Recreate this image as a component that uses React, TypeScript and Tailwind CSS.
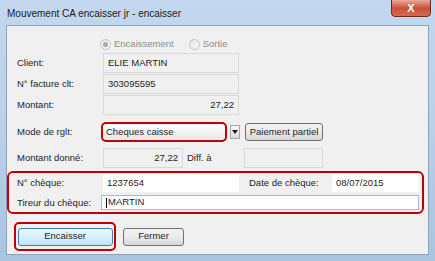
import React from 'react';

const font = "font-['Liberation_Sans',Arial,sans-serif]";

const Label: React.FC<{ children: React.ReactNode; w?: string }> = ({ children, w = 'w-[86px]' }) => (
  <div className={`${w} shrink-0 text-[9.5px] text-[#1e1e1e] leading-none`}>{children}</div>
);

const ReadField: React.FC<{ value?: string; right?: boolean; w?: string }> = ({ value = '', right, w = 'w-[136px]' }) => (
  <div
    className={`${w} h-full flex items-center px-[4px] border border-[#d9d9d9] bg-[#f0f0f0] text-[9.5px] text-[#1e1e1e] ${
      right ? 'justify-end' : ''
    }`}
  >
    {value}
  </div>
);

const WinButton: React.FC<{ children: React.ReactNode; w: string; focused?: boolean }> = ({ children, w, focused }) => (
  <div
    className={`${w} h-[18px] flex items-center justify-center rounded-[3px] border text-[9.5px] text-[#1e1e1e] ${
      focused
        ? 'border-[#3c7fb1] bg-gradient-to-b from-[#eaf6fd] via-[#d9f0fc] to-[#bee6fd]'
        : 'border-[#707070] bg-gradient-to-b from-[#f2f2f2] via-[#ebebeb] to-[#d6d6d6]'
    }`}
  >
    {children}
  </div>
);

const Radio: React.FC<{ checked?: boolean }> = ({ checked }) => (
  <span className="w-[11px] h-[11px] rounded-full border border-[#c4c4c4] bg-gradient-to-br from-[#e6e6e6] to-[#f8f8f8] flex items-center justify-center">
    {checked && <span className="w-[5px] h-[5px] rounded-full bg-[#a8a8a8]" />}
  </span>
);

export default function App() {
  return (
    <div
      className={`${font} w-[435px] h-[261px] flex flex-col px-[6px] pb-[6px] bg-gradient-to-b from-[#c3d8ee] via-[#b9d0e9] to-[#aac3df] overflow-hidden`}
    >
      {/* title bar */}
      <div className="h-[25px] shrink-0 flex items-start justify-between">
        <div className="mt-[6px] ml-[1px] text-[10px] text-[#1a1a1a]">Mouvement CA encaisser jr - encaisser</div>
        <div className="-mr-[2px] mt-[-1px] w-[40px] h-[18px] rounded-b-[4px] border border-[#6e2a1e] bg-gradient-to-b from-[#e9a99a] via-[#c9503a] to-[#d8694d] flex items-center justify-center">
          <span className="text-white text-[11px] font-bold leading-none">X</span>
        </div>
      </div>

      {/* client area */}
      <div className="flex-1 bg-[#f0f0f0] border border-[#8da2bd] flex flex-col">
        {/* radios */}
        <div className="mt-[11px] h-[14px] flex items-center pl-[93px] text-[9.5px] text-[#8d8d8d]">
          <Radio checked />
          <span className="ml-[3px]">Encaissement</span>
          <span className="ml-[15px]">
            <Radio />
          </span>
          <span className="ml-[3px]">Sortie</span>
        </div>

        <div className="mt-[2px] flex flex-col gap-[1px] pl-[10px]">
          <div className="h-[20px] flex items-center">
            <Label>Client:</Label>
            <ReadField value="ELIE MARTIN" />
          </div>
          <div className="h-[20px] flex items-center">
            <Label>N° facture clt:</Label>
            <ReadField value="303095595" />
          </div>
          <div className="h-[20px] flex items-center">
            <Label>Montant:</Label>
            <ReadField value="27,22" right />
          </div>
        </div>

        {/* mode de reglement */}
        <div className="mt-[7px] h-[20px] flex items-center pl-[10px]">
          <Label w="w-[84px]">Mode de rglt:</Label>
          <div className="w-[126px] h-[20px] rounded-[5px] border-[2px] border-[#c00000] bg-gradient-to-b from-[#fdfdfd] to-[#e6e6e6] flex items-center px-[3px] text-[9.5px] text-[#1e1e1e]">
            Cheques caisse
          </div>
          <div className="ml-[3px] w-[10px] h-[14px] border border-[#a7a7a7] bg-gradient-to-b from-[#f6f6f6] to-[#dcdcdc] flex items-center justify-center">
            <svg width="6" height="4" viewBox="0 0 6 4">
              <path d="M0 0h6L3 4z" fill="#1a1a1a" />
            </svg>
          </div>
          <div className="ml-[5px]">
            <WinButton w="w-[78px]">Paiement partiel</WinButton>
          </div>
        </div>

        {/* montant donne */}
        <div className="mt-[6px] h-[20px] flex items-center pl-[10px]">
          <Label>Montant donné:</Label>
          <ReadField value="27,22" right w="w-[80px]" />
          <span className="ml-[4px] w-[57px] text-[9.5px] text-[#1e1e1e]">Diff. à</span>
          <ReadField w="w-[79px]" />
        </div>

        {/* cheque box */}
        <div className="mt-[3px] mr-[4px] h-[43px] rounded-[6px] border-[2px] border-[#c00000] flex flex-col pt-[1px] pl-[8px] pr-[3px]">
          <div className="h-[18px] flex items-center">
            <Label>N° chèque:</Label>
            <div className="w-[136px] h-full bg-white flex items-center px-[4px] text-[9.5px] text-[#1e1e1e]">1237654</div>
            <span className="ml-[10px] w-[83px] text-[9.5px] text-[#1e1e1e]">Date de chèque:</span>
            <div className="flex-1 h-full bg-white flex items-center px-[4px] text-[9.5px] text-[#1e1e1e]">08/07/2015</div>
          </div>
          <div className="mt-[3px] h-[15px] flex items-center">
            <Label w="w-[84px]">Tireur du chèque:</Label>
            <div className="flex-1 h-full bg-white border border-[#a9b9cd] flex items-center px-[4px] text-[9.5px] text-[#1e1e1e]">
              <span className="w-px h-[10px] bg-black mr-px" />
              MARTIN
            </div>
          </div>
        </div>

        {/* buttons */}
        <div className="mt-[8px] flex items-center pl-[7px]">
          <div className="w-[102px] h-[29px] rounded-[5px] border-[2px] border-[#c00000] flex items-center justify-center">
            <WinButton w="w-[95px]" focused>
              Encaisser
            </WinButton>
          </div>
          <div className="ml-[7px]">
            <WinButton w="w-[61px]">Fermer</WinButton>
          </div>
        </div>
      </div>
    </div>
  );
}
